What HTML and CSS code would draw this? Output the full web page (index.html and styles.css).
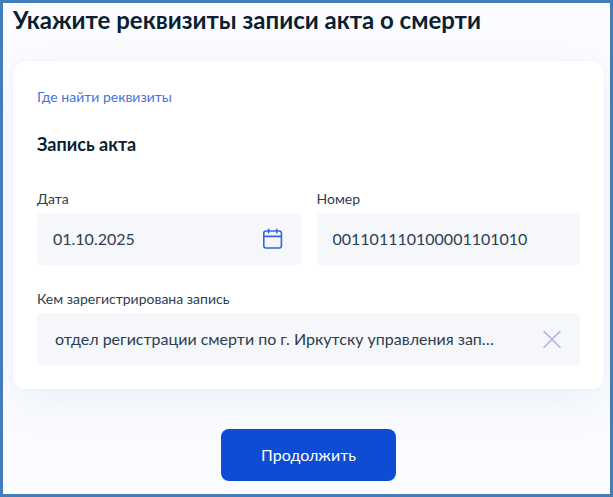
FILE: index.html
```html
<!DOCTYPE html>
<html lang="ru">
<head>
  <meta charset="UTF-8" />
  <meta name="viewport" content="width=device-width, initial-scale=1.0"/>
  <title>Реквизиты записи акта</title>

  <link rel="stylesheet" href="styles.css">
</head>
<body>
  <main class="page">
    <h1 class="title">Укажите реквизиты записи акта о смерти</h1>

    <form class="form">
      <div class="card">
        <a class="help-link" href="#">Где найти реквизиты</a>

        <h2 class="subtitle">Запись акта</h2>

        <div class="fields">
          <div class="field">
            <label for="date">Дата</label>
            <div class="control">
              <input type="text" id="date" value="01.10.2025">
              <button type="button" class="icon-btn" aria-label="Открыть календарь">
                <svg width="24" height="24" viewBox="0 0 24 24" fill="none" stroke="#3565e2" stroke-width="1.6" stroke-linecap="round">
                  <rect x="2.8" y="4" width="17.6" height="17" rx="2.2"/>
                  <path d="M3 9.4h17.4M7.6 2.4v3.4M15.8 2.4v3.4"/>
                </svg>
              </button>
            </div>
          </div>

          <div class="field">
            <label for="number">Номер</label>
            <div class="control">
              <input type="text" id="number" value="001101110100001101010">
            </div>
          </div>

          <div class="field fullWidth">
            <label for="office">Кем зарегистрирована запись</label>
            <div class="control lookup">
              <input type="text" id="office" value="отдел регистрации смерти по г. Иркутску управления записи актов гражданского состояния">
              <button type="button" class="icon-btn" aria-label="Очистить">
                <svg width="24" height="24" viewBox="0 0 24 24" fill="none" stroke="#b0bfe0" stroke-width="1.7" stroke-linecap="round">
                  <path d="M4 4.4l16 16M20 4.4l-16 16"/>
                </svg>
              </button>
            </div>
          </div>
        </div>
      </div>

      <button type="submit" class="submit-btn">Продолжить</button>
    </form>
  </main>
</body>
</html>
```

FILE: styles.css
```css
:root {
  --frame-color: #447db9;
  --bg-color: #fbfcff;
  --text-color: #0b1f33;
  --input-text: #2c3e50;
  --link-color: #4673dc;
  --input-bg: #f5f7fb;
  --accent: #0d4cd3;
}

* {
  box-sizing: border-box;
}

body {
  margin: 0;
  background: var(--bg-color);
  color: var(--text-color);
  font-family: Lato, "Open Sans", sans-serif;
}

.page {
  min-height: 100vh;
  padding: 1px 6px 12px 10px;
  border: 3px solid var(--frame-color);
  overflow: hidden;
}

.title {
  margin: 0 0 25px;
  font-size: 24px;
  line-height: 32px;
  font-weight: 700;
}

.form {
  display: flex;
  flex-direction: column;
  align-items: center;
  gap: 40px;
}

.card {
  width: 100%;
  padding: 24px;
  border-radius: 12px;
  background: #fff;
  box-shadow: 0 16px 48px rgba(64, 110, 170, 0.08), 0 0 4px rgba(56, 100, 220, 0.06);
}

.help-link {
  display: block;
  width: fit-content;
  color: var(--link-color);
  font-size: 14px;
  line-height: 24px;
  text-decoration: none;
}

.subtitle {
  margin: 23px 0 33px;
  font-size: 18px;
  line-height: 24px;
  font-weight: 700;
}

/* Fields */
.fields {
  display: grid;
  grid-template-columns: 1fr 1fr;
  gap: 24px 16px;
}

.field {
  display: flex;
  flex-direction: column;
  gap: 4px;
  min-width: 0;
}

.fullWidth {
  grid-column: 1 / -1;
}

label {
  color: var(--input-text);
  font-size: 14px;
  line-height: 20px;
}

.control {
  display: flex;
  align-items: center;
  height: 52px;
  padding: 0 16px;
  border-radius: 4px;
  background: var(--input-bg);
}

.lookup {
  gap: 40px;
  padding-left: 18px;
}

input {
  flex: 1;
  min-width: 0;
  padding: 0;
  border: 0;
  outline: 0;
  background: none;
  color: var(--input-text);
  font-family: inherit;
  font-size: 16px;
  line-height: 24px;
  text-overflow: ellipsis;
}

/* Buttons */
.icon-btn {
  display: flex;
  padding: 0;
  border: 0;
  background: none;
  cursor: pointer;
}

.submit-btn {
  height: 52px;
  padding: 0 40px;
  border: 0;
  border-radius: 8px;
  background: var(--accent);
  color: #fff;
  font-family: inherit;
  font-size: 16px;
  line-height: 24px;
  cursor: pointer;
}
```
